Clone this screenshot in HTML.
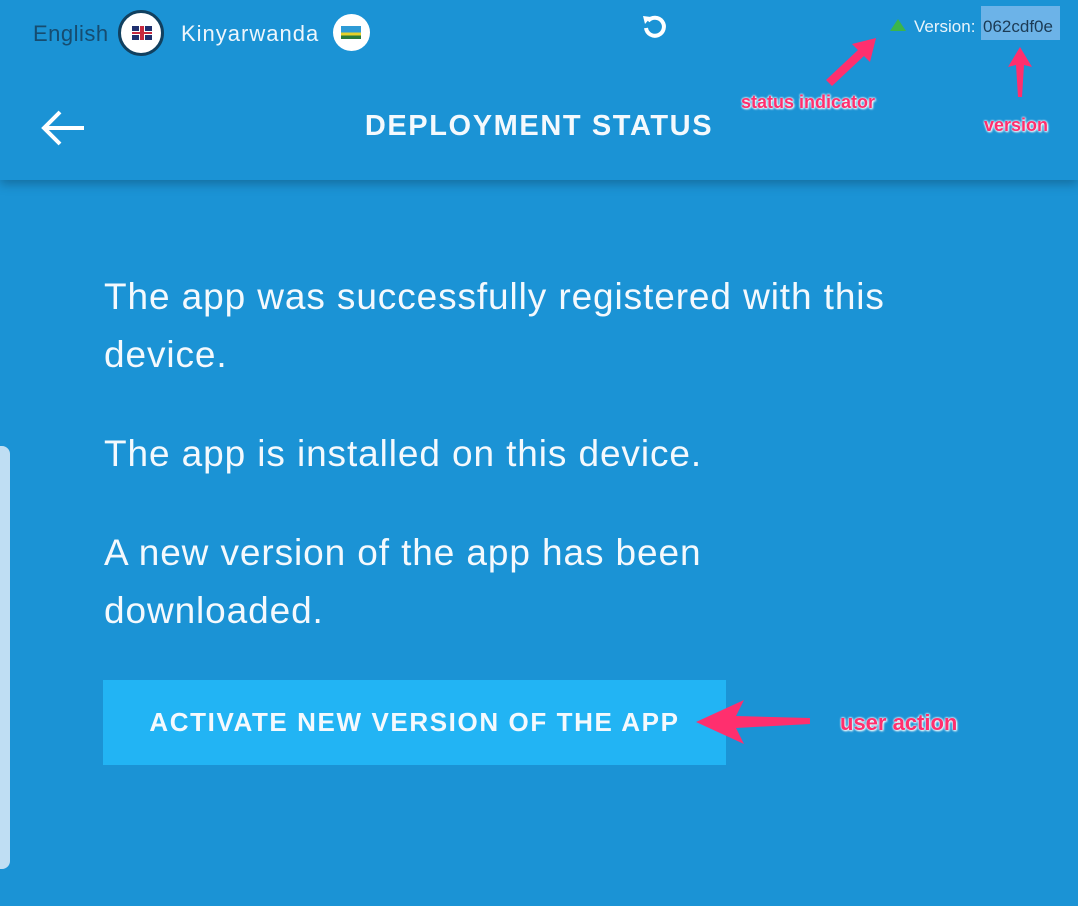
<!DOCTYPE html>
<html><head><meta charset="utf-8"><style>
body{margin:0;width:1078px;height:906px;background:#1b93d5;font-family:"Liberation Sans",sans-serif;position:relative;overflow:hidden;color:#fff}
.hdr{position:absolute;left:0;top:0;width:1078px;height:180px;background:#1b93d5;box-shadow:0 4px 10px rgba(0,0,0,.25)}
.a{position:absolute;white-space:nowrap}
.lbl{color:#ff2f6e;font-weight:bold;font-size:19px;text-shadow:0 0 2px #fff,0 0 2px #fff,1px 1px 2px #fff}
p{margin:0}
.txt{font-size:37px;line-height:58px;color:#f4f9fd;letter-spacing:0.9px}
</style></head><body>
<div class="hdr">
<div class="a" style="left:33px;top:21px;font-size:22px;color:#164c70;letter-spacing:0.5px">English</div>
<div class="a" style="left:118px;top:10px;width:46px;height:46px;border-radius:50%;background:#fff;border:3px solid #11405f;box-sizing:border-box"></div>
<div class="a" style="left:132px;top:26px;width:20px;height:14px;background:#1f2f6e"><div style="position:absolute;left:7px;top:0;width:6px;height:14px;background:#fff"></div><div style="position:absolute;left:0;top:5px;width:20px;height:4px;background:#fff"></div><div style="position:absolute;left:8px;top:0;width:4px;height:14px;background:#c8283e"></div><div style="position:absolute;left:0;top:6px;width:20px;height:2px;background:#c8283e"></div></div>
<div class="a" style="left:181px;top:21px;font-size:22px;color:#eef6fc;letter-spacing:1px">Kinyarwanda</div>
<div class="a" style="left:333px;top:14px;width:37px;height:37px;border-radius:50%;background:#fff"></div>
<div class="a" style="left:341px;top:26px;width:20px;height:13px;background:linear-gradient(#2e9bd6 0 50%,#e6d02a 50% 75%,#2a7a3a 75%)"></div>
<svg class="a" style="left:640px;top:12px" width="28" height="28" viewBox="0 0 28 28"><path d="M8 9 A9 9 0 1 1 6 16" fill="none" stroke="#fff" stroke-width="4"/><path d="M3 4 L11 5 L5 12 Z" fill="#fff"/></svg>
<svg class="a" style="left:889px;top:18px" width="18" height="16"><path d="M9 1 L17 13 L1 13 Z" fill="#3bb54a"/></svg>
<div class="a" style="left:914px;top:17px;font-size:17px;color:#e8f4fb">Version:</div>
<div class="a" style="left:981px;top:6px;width:79px;height:34px;background:#6cb3e8"></div>
<div class="a" style="left:983px;top:17px;font-size:17px;color:#1c3b55">062cdf0e</div>
<svg class="a" style="left:40px;top:108px" width="48" height="40"><path d="M44 20 H4 M20 4 L4 20 L20 36" fill="none" stroke="#fff" stroke-width="4"/></svg>
<div class="a" style="left:0;width:1078px;top:110px;text-align:center;font-size:29px;font-weight:bold;color:#f4f9fd;letter-spacing:1.6px">DEPLOYMENT STATUS</div>
</div>
<svg class="a" style="left:820px;top:30px" width="60" height="60"><path d="M6 50 L38 20 L32 14 L56 8 L50 32 L44 26 L12 56 Z" fill="#ff2f6e"/></svg>
<svg class="a" style="left:1005px;top:45px" width="30" height="55"><path d="M15 2 L27 22 L19 20 L17 52 L13 52 L11 20 L3 22 Z" fill="#ff2f6e"/></svg>
<div class="a lbl" style="left:741px;top:92px;font-size:18px">status indicator</div>
<div class="a lbl" style="left:984px;top:115px;font-size:18px">version</div>
<div class="a" style="left:0;top:446px;width:10px;height:423px;background:#bfdef3;border-radius:0 8px 8px 0"></div>
<div class="a" style="left:104px;top:268px;width:850px;white-space:normal">
<p class="txt">The app was successfully registered with this device.</p>
<p class="txt" style="margin-top:41px">The app is installed on this device.</p>
<p class="txt" style="margin-top:41px;width:720px">A new version of the app has been downloaded.</p>
</div>
<div class="a" style="left:103px;top:680px;width:623px;height:85px;background:#22b4f4;font-size:26px;font-weight:bold;text-align:center;line-height:85px;color:#f4f9fd;letter-spacing:1.6px">ACTIVATE NEW VERSION OF THE APP</div>
<svg class="a" style="left:694px;top:698px" width="120" height="50"><path d="M2 24 L50 2 L42 18 L116 20 L116 26 L42 30 L50 46 Z" fill="#ff2f6e"/></svg>
<div class="a lbl" style="left:840px;top:710px;font-size:22px">user action</div>
</body></html>
